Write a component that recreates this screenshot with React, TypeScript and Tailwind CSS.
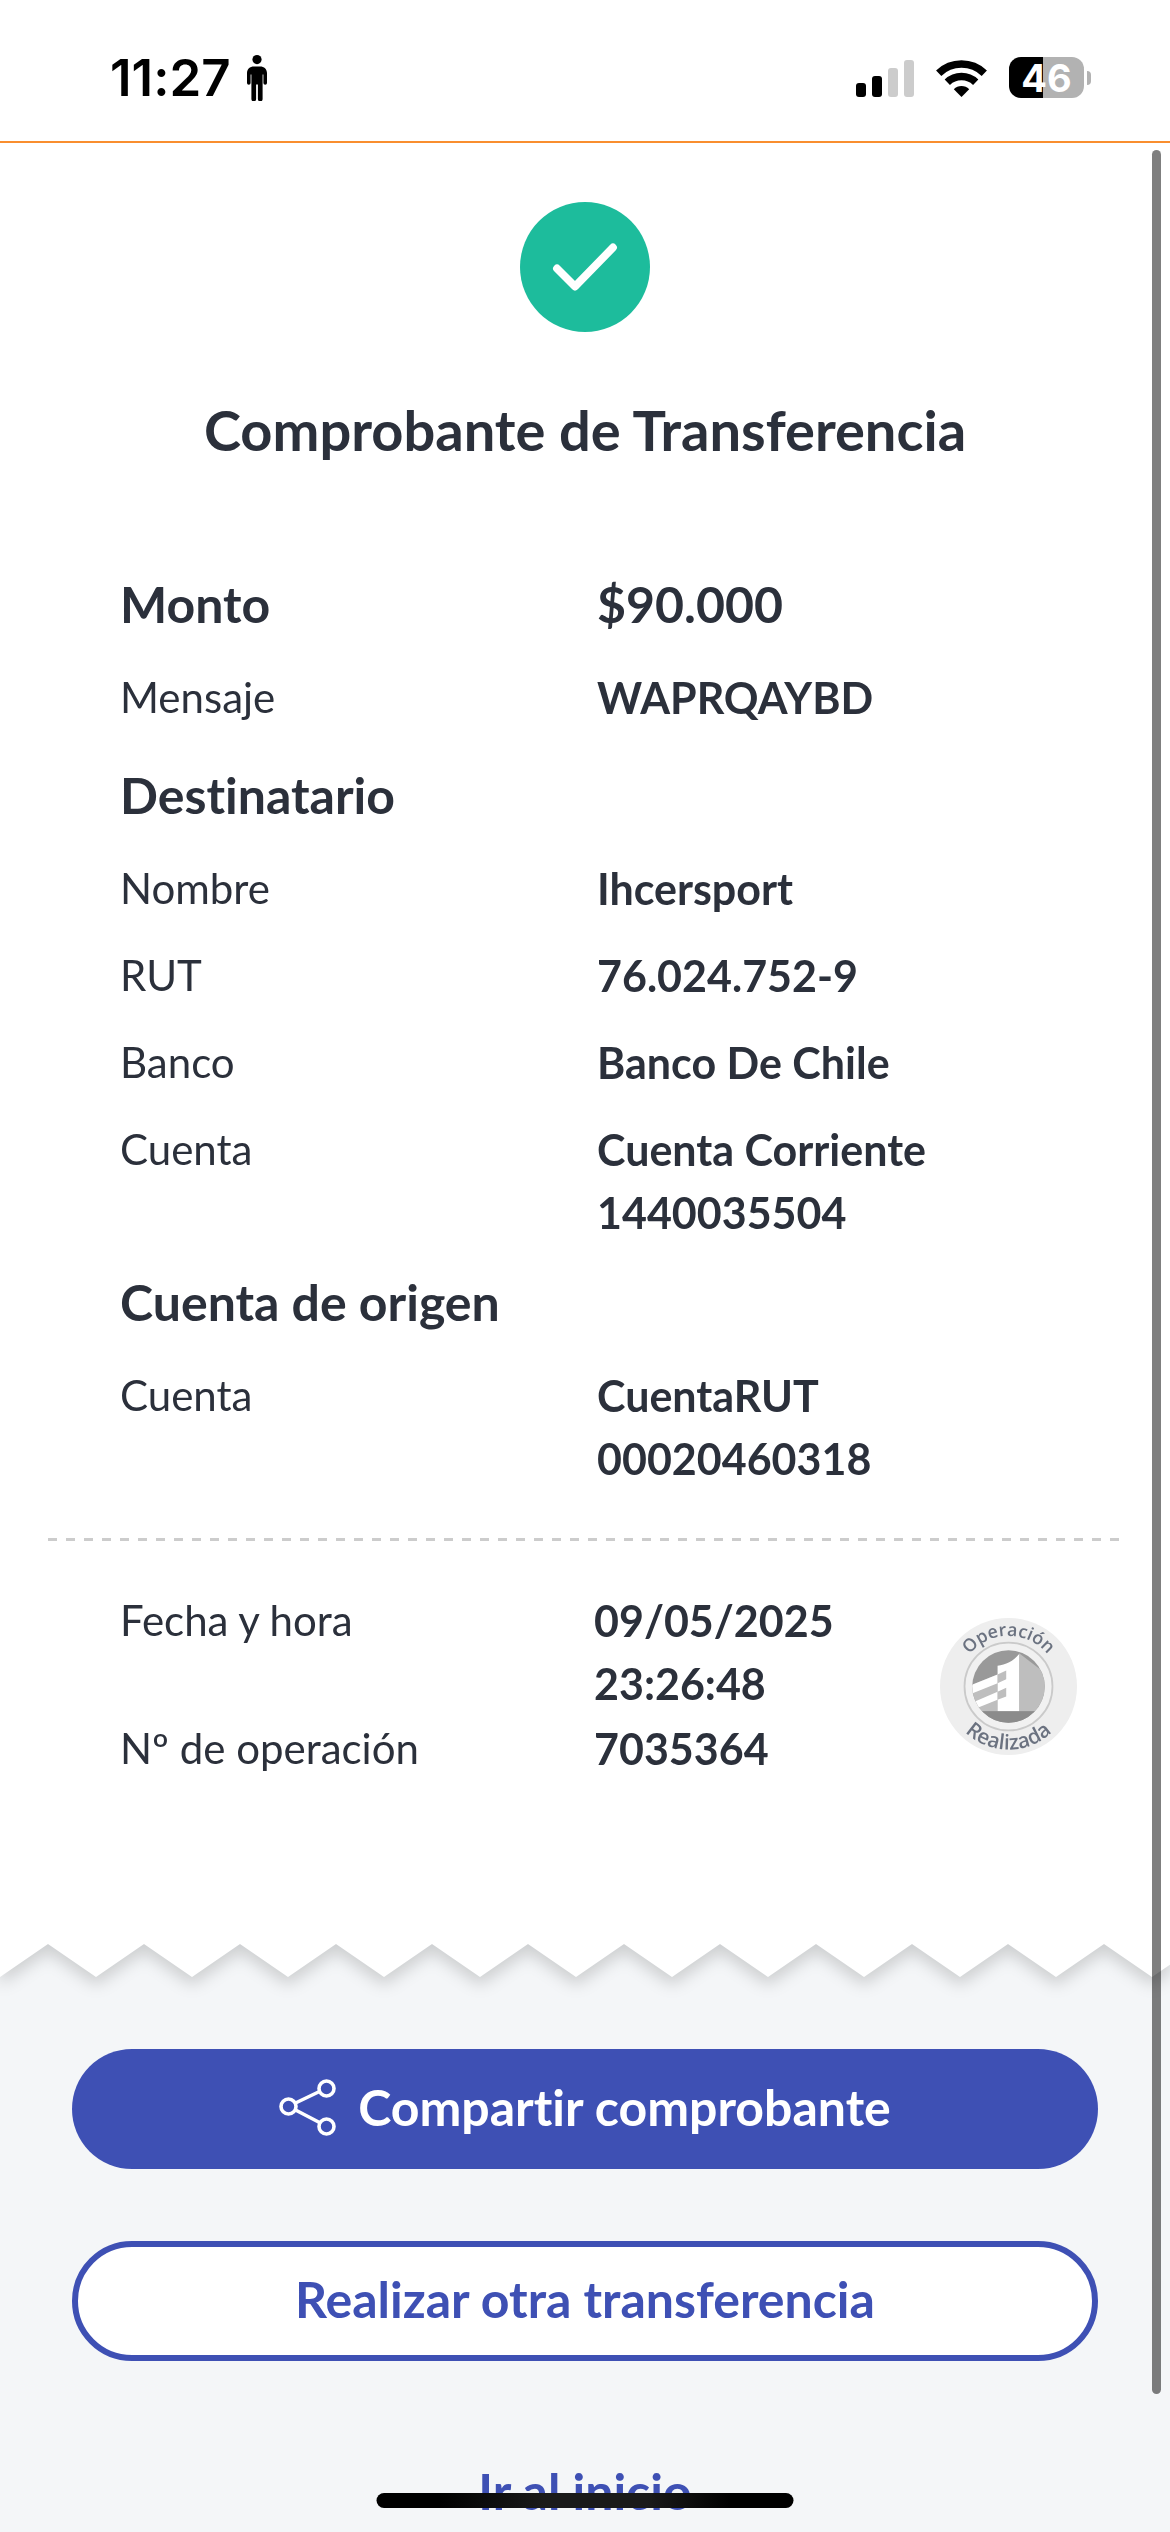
import React from 'react';

interface Row {
  label: string;
  values: string[];
}

const recipient: Row[] = [
  { label: 'Nombre', values: ['Ihcersport'] },
  { label: 'RUT', values: ['76.024.752-9'] },
  { label: 'Banco', values: ['Banco De Chile'] },
  { label: 'Cuenta', values: ['Cuenta Corriente', '1440035504'] },
];

const origin: Row[] = [{ label: 'Cuenta', values: ['CuentaRUT', '00020460318'] }];

const operation: Row[] = [
  { label: 'Fecha y hora', values: ['09/05/2025', '23:26:48'] },
  { label: 'Nº de operación', values: ['7035364'] },
];

const PersonIcon = () => (
  <svg width="20" height="46" viewBox="0 0 20 46" aria-hidden="true">
    <circle cx="10" cy="4.6" r="4.6" />
    <path d="M7 11.5h6c4.2 0 7 2.6 7 6.6V28a1.7 1.7 0 0 1-3.6 0v-8.5h-.8V44a2.2 2.2 0 0 1-4.7 0V29.5h-1.8V44a2.2 2.2 0 0 1-4.7 0V19.5h-.8V28A1.7 1.7 0 0 1 0 28v-9.9c0-4 2.8-6.6 7-6.6z" />
  </svg>
);

const SignalIcon = () => (
  <svg width="58" height="38" viewBox="0 0 58 38" aria-hidden="true">
    <rect x="0" y="24" width="10" height="14" rx="3" />
    <rect x="16" y="17" width="10" height="21" rx="3" />
    <rect x="32" y="9" width="10" height="29" rx="3" fill="#cccccc" />
    <rect x="48" y="1" width="10" height="37" rx="3" fill="#cccccc" />
  </svg>
);

const WifiIcon = () => (
  <svg width="51" height="38" viewBox="0 0 51 38" aria-hidden="true">
    <g fill="none" stroke="#000" strokeWidth="7.6">
      <path d="M2.7 14.2a33 33 0 0 1 45.6 0" />
      <path d="M11.3 23.2a20.5 20.5 0 0 1 28.4 0" />
    </g>
    <path d="M25.5 38l-7.7-7.8a11 11 0 0 1 15.4 0z" />
  </svg>
);

const ShareIcon = () => (
  <svg width="57" height="57" viewBox="0 0 57 57" fill="none" stroke="currentColor" strokeWidth="3.6" aria-hidden="true">
    <circle cx="9.5" cy="27.5" r="7.5" />
    <circle cx="47.5" cy="9.5" r="7.5" />
    <circle cx="47.5" cy="47.5" r="7.5" />
    <path d="M16.5 24l24-11.5M16.5 31l24 12.5" />
  </svg>
);

const CheckBadge = () => (
  <svg className="mx-auto" width="130" height="130" viewBox="0 0 130 130" role="img" aria-label="Éxito">
    <circle cx="65" cy="65" r="65" fill="#1dbc9c" />
    <path d="M37 66.5l18 18 38-39" fill="none" stroke="#fff" strokeWidth="7.8" strokeLinecap="round" strokeLinejoin="round" />
  </svg>
);

const Seal = () => (
  <svg className="w-full" viewBox="0 0 138 138">
    <defs>
      <clipPath id="seal-core">
        <circle cx="69" cy="69" r="36.5" />
      </clipPath>
      <path id="seal-top" d="M18 69a51 51 0 0 1 102 0" />
      <path id="seal-bottom" d="M5.5 69a63.5 63.5 0 0 0 127 0" />
    </defs>
    <circle cx="69" cy="69" r="69" fill="#eeeeee" />
    <circle cx="69" cy="69" r="44.3" fill="#f1f1f1" stroke="#cacaca" strokeWidth="1.8" />
    <g clipPath="url(#seal-core)">
      <rect x="30" y="30" width="78" height="78" fill="#999999" />
      <path d="M79.7 35.5L108 57v37H79.7z" fill="#bebebe" />
      <path d="M30 68l28-11v37H30z" fill="#bebebe" />
      <path d="M30 68l28-11v8.7L30 77z" fill="#fff" />
      <path d="M30 86.2l28-11.9v8L30 93.5z" fill="#fff" />
      <path d="M58 48c8-.5 16-4.5 21.7-11.7V94H58z" fill="#fff" />
      <path d="M58 57l8.7-4v8.7l-8.7 4zM58 74.3l8.7-4V79L58 82.3z" fill="#bebebe" />
      <rect x="30" y="94" width="78" height="16" fill="#8b8b8b" />
    </g>
    <g className="font-['Open_Sans'] font-semibold" fill="#6b7280" textAnchor="middle">
      <text className="text-[18px]"><textPath href="#seal-top" startOffset="50%">Operación</textPath></text>
      <text className="text-[21px]"><textPath href="#seal-bottom" startOffset="50%">Realizada</textPath></text>
    </g>
  </svg>
);

const ZigzagEdge = () => (
  <svg className="block h-[33px] w-full" aria-hidden="true">
    <defs>
      <pattern id="teeth" width="96" height="33" patternUnits="userSpaceOnUse">
        <path d="M0 0h96v33L48 0 0 33z" fill="#fff" />
      </pattern>
    </defs>
    <rect width="100%" height="33" fill="url(#teeth)" />
  </svg>
);

const Values = ({ values }: { values: string[] }) => (
  <dd className="text-[43px] font-bold">
    {values.map((value) => (
      <span key={value} className="block">{value}</span>
    ))}
  </dd>
);

const Details = ({ rows }: { rows: Row[] }) => (
  <dl className="mt-[26px] grid grid-cols-2 gap-6 text-[42px] leading-[63px]">
    {rows.map((row) => (
      <React.Fragment key={row.label}>
        <dt>{row.label}</dt>
        <Values values={row.values} />
      </React.Fragment>
    ))}
  </dl>
);

const StatusBar = () => (
  <header className="flex h-[143px] shrink-0 items-center border-b-2 border-[#f98e2f] bg-white pr-[79px] pb-2 pl-[110px] pt-[22px] font-['Inter'] text-black">
    <div className="flex flex-1 items-center gap-4">
      <span className="text-[51px] leading-[60px] font-semibold">11:27</span>
      <PersonIcon />
    </div>
    <div className="flex items-center gap-[22px]">
      <SignalIcon />
      <WifiIcon />
      <div className="flex items-center gap-[3px]">
        <span className="flex h-[41px] w-[75px] items-center justify-center rounded-xl bg-[linear-gradient(90deg,#000_46%,#b2b2b2_46%)] text-[38px] leading-none font-bold text-white">
          46
        </span>
        <span className="h-[14px] w-1 rounded-r-full bg-[#b2b2b2]" />
      </div>
    </div>
  </header>
);

export default function App() {
  return (
    <div className="relative flex h-screen flex-col overflow-hidden bg-[#f4f6f8] font-['Lato',sans-serif] text-[#2b303b] [font-variant-ligatures:none]">
      <StatusBar />

      <main className="min-h-0 flex-1 overflow-hidden">
        <article className="drop-shadow-[0_8px_8px_rgba(0,0,0,0.16)]">
          <div className="bg-white pt-[59px] pb-[164px]">
            <CheckBadge />
            <h1 className="mt-[58px] text-center text-[56px] leading-[80px] font-bold">Comprobante de Transferencia</h1>

            <section className="px-[120px] pt-[98px]">
              <div className="grid grid-cols-2 gap-6 text-[50px] leading-[72px] font-bold">
                <h2>Monto</h2>
                <p>$90.000</p>
              </div>
              <Details rows={[{ label: 'Mensaje', values: ['WAPRQAYBD'] }]} />
              <h2 className="mt-[30px] text-[50px] leading-[72px] font-bold">Destinatario</h2>
              <Details rows={recipient} />
              <h2 className="mt-[22px] text-[50px] leading-[72px] font-bold">Cuenta de origen</h2>
              <Details rows={origin} />
            </section>

            <div className="mx-12 mt-12 h-[3px] bg-[repeating-linear-gradient(90deg,#cccccc_0_9px,transparent_9px_18px)]" />

            <section className="mt-12 flex items-center pr-[93px] pl-[120px]">
              <dl className="grid flex-1 grid-cols-[474fr_346fr] gap-y-[2px] text-[42px] leading-[63px]">
                {operation.map((row) => (
                  <React.Fragment key={row.label}>
                    <dt>{row.label}</dt>
                    <Values values={row.values} />
                  </React.Fragment>
                ))}
              </dl>
              <div className="w-[137px] pt-1">
                <Seal />
              </div>
            </section>
          </div>
          <ZigzagEdge />
        </article>

        <nav className="flex flex-col gap-[72px] px-[72px] pt-[72px] text-[50px] leading-[72px] font-bold">
          <button type="button" className="flex h-[120px] items-center justify-center gap-[22px] rounded-full bg-[#3e50b4] pb-1 text-white">
            <ShareIcon />
            Compartir comprobante
          </button>
          <button type="button" className="h-[120px] rounded-full border-[6px] border-[#3e50b4] bg-white pb-1 text-[#3e50b4]">
            Realizar otra transferencia
          </button>
          <button type="button" className="h-[120px] rounded-full pb-1 text-[#3e50b4]">
            Ir al inicio
          </button>
        </nav>
      </main>

      {/* scroll thumb and home indicator */}
      <div className="absolute top-[150px] right-[9px] bottom-[138px] w-[9px] rounded-full bg-black/50" />
      <div className="absolute bottom-6 left-1/2 h-[15px] w-[417px] -translate-x-1/2 rounded-full bg-[linear-gradient(90deg,#000_15%,#1a1a1a_40%,#1a1a1a_65%,#000_85%)]" />
    </div>
  );
}
